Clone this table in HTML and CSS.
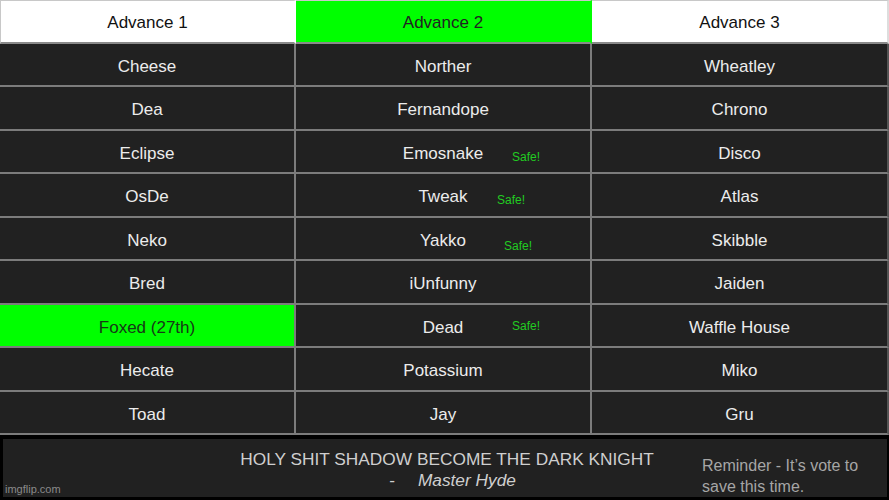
FILE: index.html
```html
<!DOCTYPE html>
<html>
<head>
<meta charset="utf-8">
<link rel="stylesheet" href="styles.css">
</head>
<body>
<div class="board">
  <div class="grid">
    <div class="cell head">Advance 1</div>
    <div class="cell head green">Advance 2</div>
    <div class="cell head last">Advance 3</div>

    <div class="cell">Cheese</div>
    <div class="cell">Norther</div>
    <div class="cell last">Wheatley</div>

    <div class="cell">Dea</div>
    <div class="cell">Fernandope</div>
    <div class="cell last">Chrono</div>

    <div class="cell">Eclipse</div>
    <div class="cell">Emosnake<span class="safe safe-emo">Safe!</span></div>
    <div class="cell last">Disco</div>

    <div class="cell">OsDe</div>
    <div class="cell">Tweak<span class="safe safe-tweak">Safe!</span></div>
    <div class="cell last">Atlas</div>

    <div class="cell">Neko</div>
    <div class="cell">Yakko<span class="safe safe-yakko">Safe!</span></div>
    <div class="cell last">Skibble</div>

    <div class="cell">Bred</div>
    <div class="cell">iUnfunny</div>
    <div class="cell last">Jaiden</div>

    <div class="cell green">Foxed (27th)</div>
    <div class="cell">Dead<span class="safe safe-dead">Safe!</span></div>
    <div class="cell last">Waffle House</div>

    <div class="cell">Hecate</div>
    <div class="cell">Potassium</div>
    <div class="cell last">Miko</div>

    <div class="cell">Toad</div>
    <div class="cell">Jay</div>
    <div class="cell last">Gru</div>
  </div>
  <div class="footer">
    <div class="quote">
      <div class="quote-main">HOLY SHIT SHADOW BECOME THE DARK KNIGHT</div>
      <div class="quote-by"><span class="dash">-</span><em>Master Hyde</em></div>
    </div>
    <div class="reminder">Reminder - It’s vote to<br>save this time.</div>
    <div class="watermark">imgflip.com</div>
  </div>
</div>
</body>
</html>
```
FILE: styles.css
```css
* { box-sizing: border-box; }
html, body {
  margin: 0;
  padding: 0;
  background: #000;
}
body {
  width: 889px;
  height: 500px;
  overflow: hidden;
  font-family: "Liberation Sans", Arial, sans-serif;
}
.board {
  width: 889px;
  height: 500px;
  background: #000;
  display: flex;
  flex-direction: column;
}
.grid {
  display: grid;
  grid-template-columns: 296px 296px 297px;
  grid-template-rows: repeat(10, 43.5px);
  background: #222;
}
.cell {
  position: relative;
  display: flex;
  align-items: center;
  justify-content: center;
  padding-top: 5px;
  background: #212121;
  color: #ececec;
  font-size: 17px;
  border-right: 2px solid #7c7c7c;
  border-bottom: 2px solid #7c7c7c;
}
.cell.last {
  border-right: 2px solid #555;
}
.cell.head {
  background: #fff;
  color: #111;
  border-top: 1px solid #c8c8c8;
  padding-top: 3px;
  border-bottom-color: #8a8a8a;
  border-right-color: #fff;
}
.cell.head:first-child { border-left: 1px solid #c8c8c8; }
.cell.head.last { border-right-color: #ddd; }
.cell.green {
  background: #00ff00;
  color: #173817;
}
.cell.head.green { border-right-color: #00ff00; color: #222; }
.safe {
  position: absolute;
  color: #22cc22;
  font-size: 12px;
}
.safe-emo { left: 216px; top: 19px; }
.safe-tweak { left: 201px; top: 19px; }
.safe-yakko { left: 208px; top: 21px; }
.safe-dead { left: 216px; top: 14px; }

.footer {
  flex: 1;
  position: relative;
  margin-top: 1px;
  border: 3px solid #000;
  border-right-width: 2px;
  background: #212121;
  display: flex;
  align-items: flex-start;
  padding: 10px 0 0 232px;
}
.quote {
  width: 424px;
  text-align: center;
  color: #cfcfcf;
  font-size: 17.3px;
  line-height: 21px;
}
.quote-by {
  display: flex;
  justify-content: center;
  gap: 23px;
  padding-left: 11px;
}
.quote-by .dash { display: inline-block; }
.quote-by em { font-style: italic; }
.reminder {
  margin-left: 43px;
  margin-top: 6px;
  color: #a6a6a6;
  font-size: 16px;
  line-height: 21px;
}
.watermark {
  position: absolute;
  left: 2px;
  bottom: 2px;
  color: #8a8a8a;
  font-size: 11px;
}
```
